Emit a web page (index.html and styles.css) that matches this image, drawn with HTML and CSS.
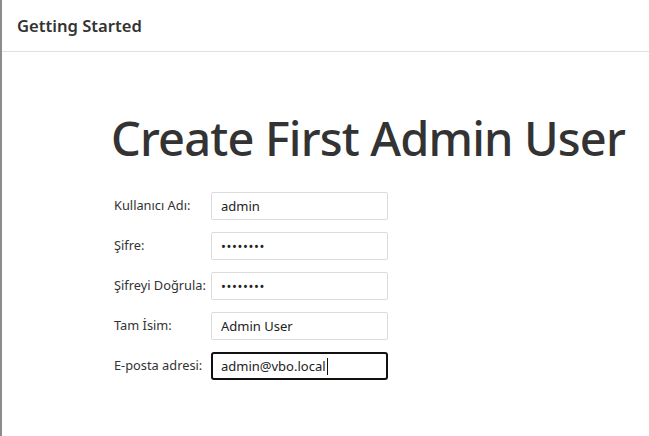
FILE: index.html
```html
<!DOCTYPE html>
<html lang="tr">
<head>
<meta charset="utf-8">
<title>Getting Started</title>
<link rel="stylesheet" href="styles.css">
</head>
<body>
<div class="frame">
  <header class="topbar">
    <h2 class="topbar-title">Getting Started</h2>
  </header>
  <main class="content">
    <h1 class="page-title">Create First Admin User</h1>
    <form class="admin-form">
      <label class="field-label" for="user">Kullanıcı Adı:</label>
      <input class="field-input" id="user" type="text" value="admin">
      <label class="field-label" for="pw">Şifre:</label>
      <input class="field-input" id="pw" type="password" value="password">
      <label class="field-label" for="pw2">Şifreyi Doğrula:</label>
      <input class="field-input" id="pw2" type="password" value="password">
      <label class="field-label" for="name">Tam İsim:</label>
      <input class="field-input" id="name" type="text" value="Admin User">
      <label class="field-label" for="mail">E-posta adresi:</label>
      <div class="focus-wrap">
        <input class="field-input is-focused" id="mail" type="text" value="admin@vbo.local">
        <span class="caret"></span>
      </div>
    </form>
  </main>
</div>
</body>
</html>
```
FILE: styles.css
```css
html, body {
  margin: 0;
  padding: 0;
  background: #ffffff;
}
body {
  font-family: "Noto Sans", "Open Sans", sans-serif;
  color: #333333;
}
.frame {
  border-left: 2px solid #8c8c8c;
  min-height: 100vh;
  box-sizing: border-box;
}
.topbar {
  height: 51px;
  border-bottom: 1px solid #e1e1e1;
  display: flex;
  align-items: center;
  padding-left: 15px;
}
.topbar-title {
  margin: 0;
  font-size: 16.6px;
  font-weight: 600;
  color: #333;
}
.content {
  padding-left: 109px;
  padding-top: 56px;
}
.page-title {
  margin: 0 0 24px 0;
  font-size: 47px;
  font-weight: 500;
  letter-spacing: -0.85px;
  line-height: 60px;
  color: #333333;
  white-space: nowrap;
}
.admin-form {
  display: grid;
  grid-template-columns: 100px 177px;
  row-gap: 12px;
  align-items: center;
}
.field-label {
  padding-left: 3px;
  font-size: 12.8px;
  color: #333;
  margin-top: -2px;
}
.field-input {
  box-sizing: border-box;
  width: 177px;
  height: 28px;
  border: 1px solid #dcdcdc;
  border-radius: 2px;
  padding: 0 0 0 9px;
  font-family: inherit;
  font-size: 13px;
  color: #222;
  outline: none;
  background: #fff;
}
.field-input[type="password"] {
  letter-spacing: 0.6px;
  font-size: 13px;
}
.focus-wrap {
  position: relative;
  width: 177px;
  height: 28px;
}
.field-input.is-focused {
  border: 2px solid #111;
  border-radius: 3px;
  padding-left: 8px;
}
.caret {
  position: absolute;
  left: 116px;
  top: 6px;
  width: 1px;
  height: 17px;
  background: #111;
}
```
